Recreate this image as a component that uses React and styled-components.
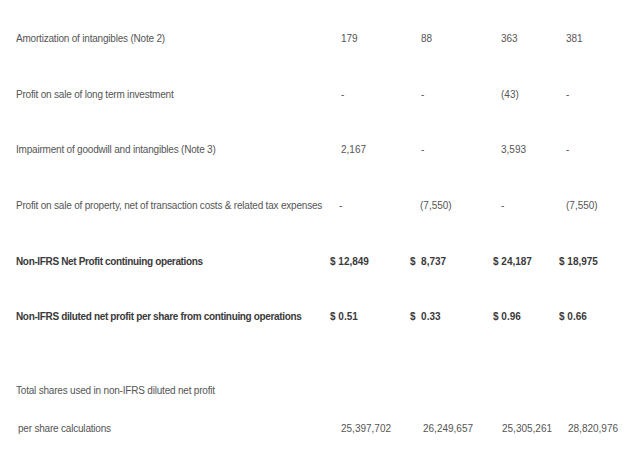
import React from 'react';
import styled, { createGlobalStyle } from 'styled-components';

const GlobalStyle = createGlobalStyle`
  html, body {
    margin: 0;
    padding: 0;
    background: #ffffff;
  }
  body {
    font-family: "Liberation Sans", Arial, sans-serif;
  }
`;

const Table = styled.div`
  width: 640px;
  padding-top: 11px;
  box-sizing: border-box;
`;

const Row = styled.div`
  display: grid;
  grid-template-columns: 314px 80px 83px 66px 1fr;
  align-items: center;
  padding-left: ${({ $indent }) => ($indent ? 18 : 16)}px;
  height: ${({ $h }) => $h || 55.6}px;
  margin-top: ${({ $gap }) => $gap || 0}px;
  font-size: 10px;
  color: ${({ $bold }) => ($bold ? '#3a3a3a' : '#555555')};
  font-weight: ${({ $bold }) => ($bold ? 700 : 400)};
`;

const Label = styled.div`
  letter-spacing: ${({ $bold }) => ($bold ? '-0.35px' : '-0.2px')};
  white-space: nowrap;
  grid-column: ${({ $span }) => ($span ? '1 / -1' : 'auto')};
`;

const Cell = styled.div`
  white-space: pre;
  padding-left: ${({ $pad }) => $pad}px;
`;

// plain figures sit a little right of the bold "$" figures in each column
const plainPad = [11, 11, 8, 7];

const rows = [
  { label: 'Amortization of intangibles (Note 2)', values: ['179', '88', '363', '381'] },
  { label: 'Profit on sale of long term investment', values: ['-', '-', '(43)', '-'] },
  { label: 'Impairment of goodwill and intangibles (Note 3)', values: ['2,167', '-', '3,593', '-'] },
  {
    label: 'Profit on sale of property, net of transaction costs & related tax expenses',
    values: ['-', '(7,550)', '-', '(7,550)'],
    pads: [9, 10, 8, 7],
  },
  { label: 'Non-IFRS Net Profit continuing operations', values: ['$ 12,849', '$  8,737', '$ 24,187', '$ 18,975'], bold: true },
  {
    label: 'Non-IFRS diluted net profit per share from continuing operations',
    values: ['$ 0.51', '$  0.33', '$ 0.96', '$ 0.66'],
    bold: true,
  },
];

const App = () => (
  <>
    <GlobalStyle />
    <Table>
      {rows.map((r) => (
        <Row key={r.label} $bold={r.bold}>
          <Label $bold={r.bold}>{r.label}</Label>
          {r.values.map((v, i) => (
            <Cell key={i} $pad={r.bold ? 0 : (r.pads || plainPad)[i]}>
              {v}
            </Cell>
          ))}
        </Row>
      ))}
      <Row $h={38} $gap={27}>
        <Label $span>Total shares used in non-IFRS diluted net profit</Label>
      </Row>
      <Row $h={38} $indent>
        <Label>per share calculations</Label>
        {['25,397,702', '26,249,657', '25,305,261', '28,820,976'].map((v, i) => (
          <Cell key={v} $pad={[9, 11, 7, 7][i]}>
            {v}
          </Cell>
        ))}
      </Row>
    </Table>
  </>
);

export default App;
